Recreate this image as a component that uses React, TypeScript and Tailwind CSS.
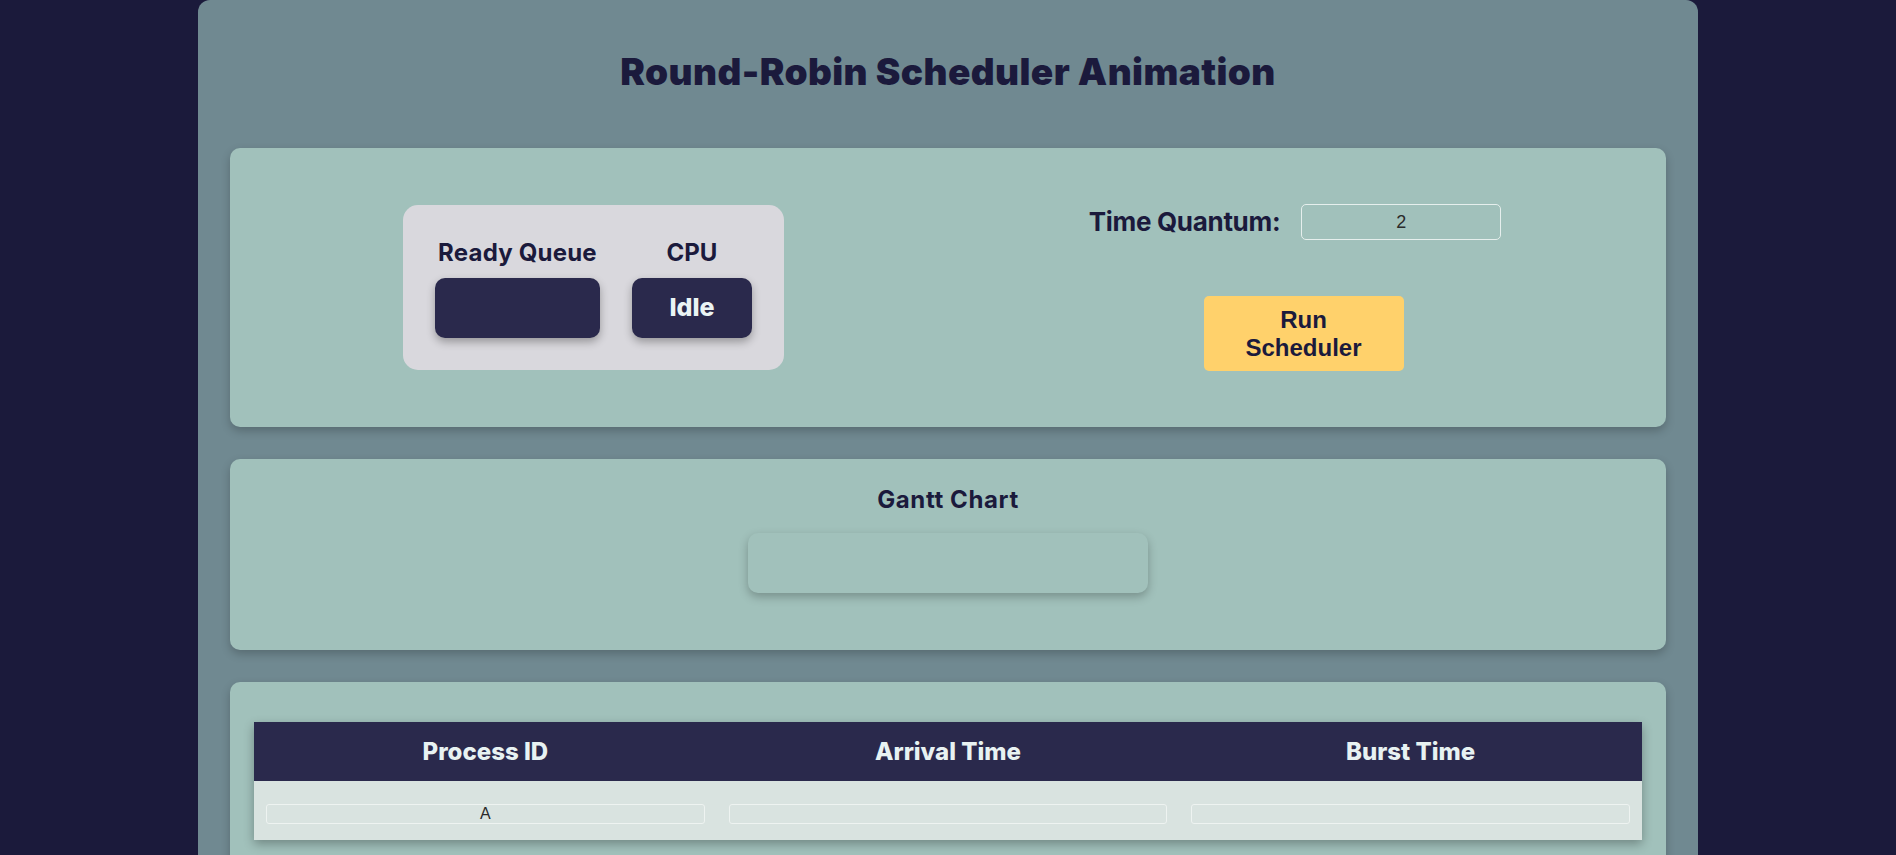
import React from "react";

const head = { fontFamily: "Inter, 'Noto Sans', sans-serif" } as React.CSSProperties;
const arial = { fontFamily: "'Liberation Sans', Arial, sans-serif" } as React.CSSProperties;

export default function App() {
  return (
    <div className="min-h-screen w-full bg-[#1b1a3b]">
      <div className="mx-auto w-[1500px] rounded-[12px] bg-[#708991] px-[32px] pt-[45px] pb-[32px]" style={head}>
        <h1 className="mb-[49px] text-center text-[37px] font-black leading-[54px] tracking-[0.4px] text-[#1b1a3c]">
          Round-Robin Scheduler Animation
        </h1>

        <div className="flex flex-col gap-[32px]">
          {/* Panel 1 */}
          <div className="grid grid-cols-2 items-center rounded-[10px] bg-[#a1c1bb] py-[56px] shadow-[0_4px_10px_rgba(0,0,0,0.22)]">
            <div className="flex justify-center pl-[9px]">
              <div className="flex gap-[32px] rounded-[15px] bg-[#d9d8dd] p-[32px] pt-[30px]">
                <div className="flex flex-col items-center">
                  <div className="mb-[8px] text-[24px] font-bold leading-[35px] tracking-[0.2px] text-[#1b1a3c]">Ready Queue</div>
                  <div className="h-[60px] w-[165px] rounded-[10px] bg-[#2a294c] shadow-[0_4px_8px_rgba(0,0,0,0.3)]" />
                </div>
                <div className="flex flex-col items-center">
                  <div className="mb-[8px] text-[24px] font-bold leading-[35px] text-[#1b1a3c]">CPU</div>
                  <div className="flex h-[60px] w-[120px] items-center justify-center rounded-[10px] bg-[#2a294c] text-[25px] font-extrabold text-[#eaf4f4] shadow-[0_4px_8px_rgba(0,0,0,0.3)]">
                    Idle
                  </div>
                </div>
              </div>
            </div>
            <div className="flex h-[167px] flex-col items-center justify-between pr-[7px]">
              <div className="mr-[17px] flex items-center gap-[21px]">
                <span className="text-[26px] font-bold leading-[36px] tracking-[-0.3px] text-[#1b1a3c]">Time Quantum:</span>
                <div
                  className="flex h-[36px] w-[200px] items-center justify-center rounded-[5px] border border-[#e6efed] text-[18px] text-[#2a2a2a]"
                  style={arial}
                >
                  2
                </div>
              </div>
              <button
                className="h-[75px] w-[200px] rounded-[5px] bg-[#ffd16b] text-[24px] font-bold leading-[28px] text-[#1b1a3c]"
                style={arial}
              >
                Run
                <br />
                Scheduler
              </button>
            </div>
          </div>

          {/* Panel 2 */}
          <div className="flex h-[191px] flex-col items-center rounded-[10px] bg-[#a1c1bb] pt-[24px] shadow-[0_4px_10px_rgba(0,0,0,0.22)]">
            <div className="text-[24px] font-bold leading-[33px] tracking-[0.6px] text-[#1b1a3c]">Gantt Chart</div>
            <div className="mt-[17px] h-[60px] w-[400px] rounded-[10px] bg-[#a1c1bb] shadow-[0_4px_10px_rgba(0,0,0,0.25)]" />
          </div>

          {/* Panel 3 */}
          <div className="rounded-[10px] bg-[#a1c1bb] px-[24px] pt-[40px] pb-[40px] shadow-[0_4px_10px_rgba(0,0,0,0.22)]">
            <div className="shadow-[0_4px_10px_rgba(0,0,0,0.3)]">
              <div className="grid h-[59px] grid-cols-3 items-center bg-[#2a294c] text-[24px] font-extrabold text-[#e8f2f2]">
                <div className="text-center">Process ID</div>
                <div className="text-center">Arrival Time</div>
                <div className="text-center">Burst Time</div>
              </div>
              <div className="grid h-[59px] grid-cols-3 items-center bg-[#d9e3e0] pt-[7px]">
                {["A", "", ""].map((v, i) => (
                  <div key={i} className="px-[12px]">
                    <div
                      className="flex h-[20px] w-full items-center justify-center rounded-[3px] border border-[#eef3f1] text-[16px] leading-none text-[#2a2a2a]"
                      style={arial}
                    >
                      {v}
                    </div>
                  </div>
                ))}
              </div>
            </div>
          </div>
        </div>
      </div>
    </div>
  );
}
